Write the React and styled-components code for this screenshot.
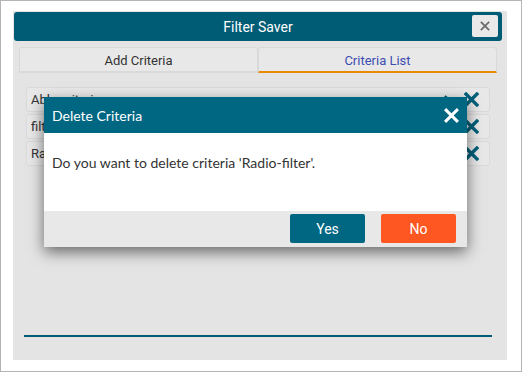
import React from "react";
import styled, { createGlobalStyle } from "styled-components";

const Global = createGlobalStyle`
  html, body { margin: 0; padding: 0; background: #ffffff; }
  body { font-family: Roboto, "Liberation Sans", sans-serif; }
  * { box-sizing: border-box; }
`;

const Frame = styled.div`
  position: relative;
  width: 522px;
  height: 372px;
  border: 1px solid #b4b4b4;
  padding: 10px 14px 11px 12px;
  background: #ffffff;
`;

const Panel = styled.div`
  height: 100%;
  background: #e4e4e4;
  padding: 1px 5px 0 1px;
  display: flex;
  flex-direction: column;
`;

const Header = styled.div`
  height: 29px;
  background: #005b75;
  border-radius: 3px;
  display: flex;
  align-items: center;
  justify-content: center;
  position: relative;
  color: #ffffff;
  font-size: 14px;
`;

const HeaderClose = styled.button`
  position: absolute;
  right: 4px;
  top: 3px;
  width: 26px;
  height: 22px;
  border: none;
  border-radius: 2px;
  background: #e9e9e9;
  display: flex;
  align-items: center;
  justify-content: center;
  padding: 0;
`;

const TabBar = styled.div`
  margin: 6px 5px 0 5px;
  height: 26px;
  display: flex;
`;

const Tab = styled.div`
  flex: 1;
  display: flex;
  align-items: center;
  justify-content: center;
  font-size: 13px;
  background: #e8e8e8;
  border: 1px solid #d9d9d9;
  border-radius: 3px 3px 0 0;
  color: ${(p) => (p.$active ? "#3d4db1" : "#333333")};
  border-bottom: 2px solid ${(p) => (p.$active ? "#e98a00" : "#d9d9d9")};
  padding-top: 1px;
`;

const List = styled.div`
  margin: 14px 12px 0 12px;
  display: flex;
  flex-direction: column;
  gap: 2px;
`;

const Row = styled.div`
  height: 25px;
  background: #e8e8e8;
  border: 1px solid #dadada;
  border-radius: 3px;
  display: flex;
  align-items: center;
  padding: 0 10px 0 4px;
  font-size: 13px;
  color: #333333;
`;

const RowName = styled.span`
  flex: 1;
  overflow: hidden;
  white-space: nowrap;
`;

const RowIcons = styled.div`
  display: flex;
  align-items: center;
  gap: 16px;
`;

const BottomLine = styled.div`
  margin: auto 10px 23px 10px;
  height: 2px;
  background: #005b75;
`;

const Modal = styled.div`
  position: absolute;
  left: 43px;
  top: 96px;
  width: 423px;
  height: 150px;
  background: #ffffff;
  box-shadow: 0 5px 14px rgba(0, 0, 0, 0.55);
  display: flex;
  flex-direction: column;
  font-family: Lato, "Open Sans", sans-serif;
`;

const ModalHeader = styled.div`
  height: 36px;
  background: #006783;
  color: #ffffff;
  display: flex;
  align-items: center;
  justify-content: space-between;
  padding: 0 8px 0 8px;
  font-size: 14px;
`;

const ModalBody = styled.div`
  flex: 1;
  padding: 21px 8px 0 8px;
  font-size: 14px;
  color: #333333;
`;

const ModalFooter = styled.div`
  height: 36px;
  background: #e8e8e8;
  display: flex;
  justify-content: flex-end;
  align-items: flex-start;
  gap: 16px;
  padding: 3px 11px 0 0;
`;

const Button = styled.button`
  width: 75px;
  height: 29px;
  border: none;
  border-radius: 2px;
  color: #ffffff;
  font-family: Roboto, "Liberation Sans", sans-serif;
  font-size: 14px;
  background: ${(p) => (p.$danger ? "#ff5722" : "#006783")};
  padding: 0;
`;

const Cross = ({ size = 14, color, width = 3 }) => (
  <svg width={size} height={size} viewBox="0 0 14 14">
    <path d="M2 2 L12 12 M12 2 L2 12" stroke={color} strokeWidth={width} strokeLinecap="square" fill="none" />
  </svg>
);

const Check = () => (
  <svg width="13" height="12" viewBox="0 0 13 12">
    <path d="M1.5 6.5 L5 10 L11.5 2" stroke="#00607a" strokeWidth="2.6" fill="none" />
  </svg>
);

const rows = ["Able-criteria", "filter-criteria", "Radio-filter"];

export default function App() {
  return (
    <>
      <Global />
      <Frame>
        <Panel>
          <Header>
            Filter Saver
            <HeaderClose>
              <Cross size={10} color="#6b6b6b" width={2.4} />
            </HeaderClose>
          </Header>
          <TabBar>
            <Tab>Add Criteria</Tab>
            <Tab $active>Criteria List</Tab>
          </TabBar>
          <List>
            {rows.map((r) => (
              <Row key={r}>
                <RowName>{r}</RowName>
                <RowIcons>
                  <Check />
                  <Cross size={15} color="#00607a" width={3.2} />
                </RowIcons>
              </Row>
            ))}
          </List>
          <BottomLine />
        </Panel>
        <Modal>
          <ModalHeader>
            Delete Criteria
            <Cross size={15} color="#ffffff" width={2.8} />
          </ModalHeader>
          <ModalBody>Do you want to delete criteria 'Radio-filter'.</ModalBody>
          <ModalFooter>
            <Button>Yes</Button>
            <Button $danger>No</Button>
          </ModalFooter>
        </Modal>
      </Frame>
    </>
  );
}
